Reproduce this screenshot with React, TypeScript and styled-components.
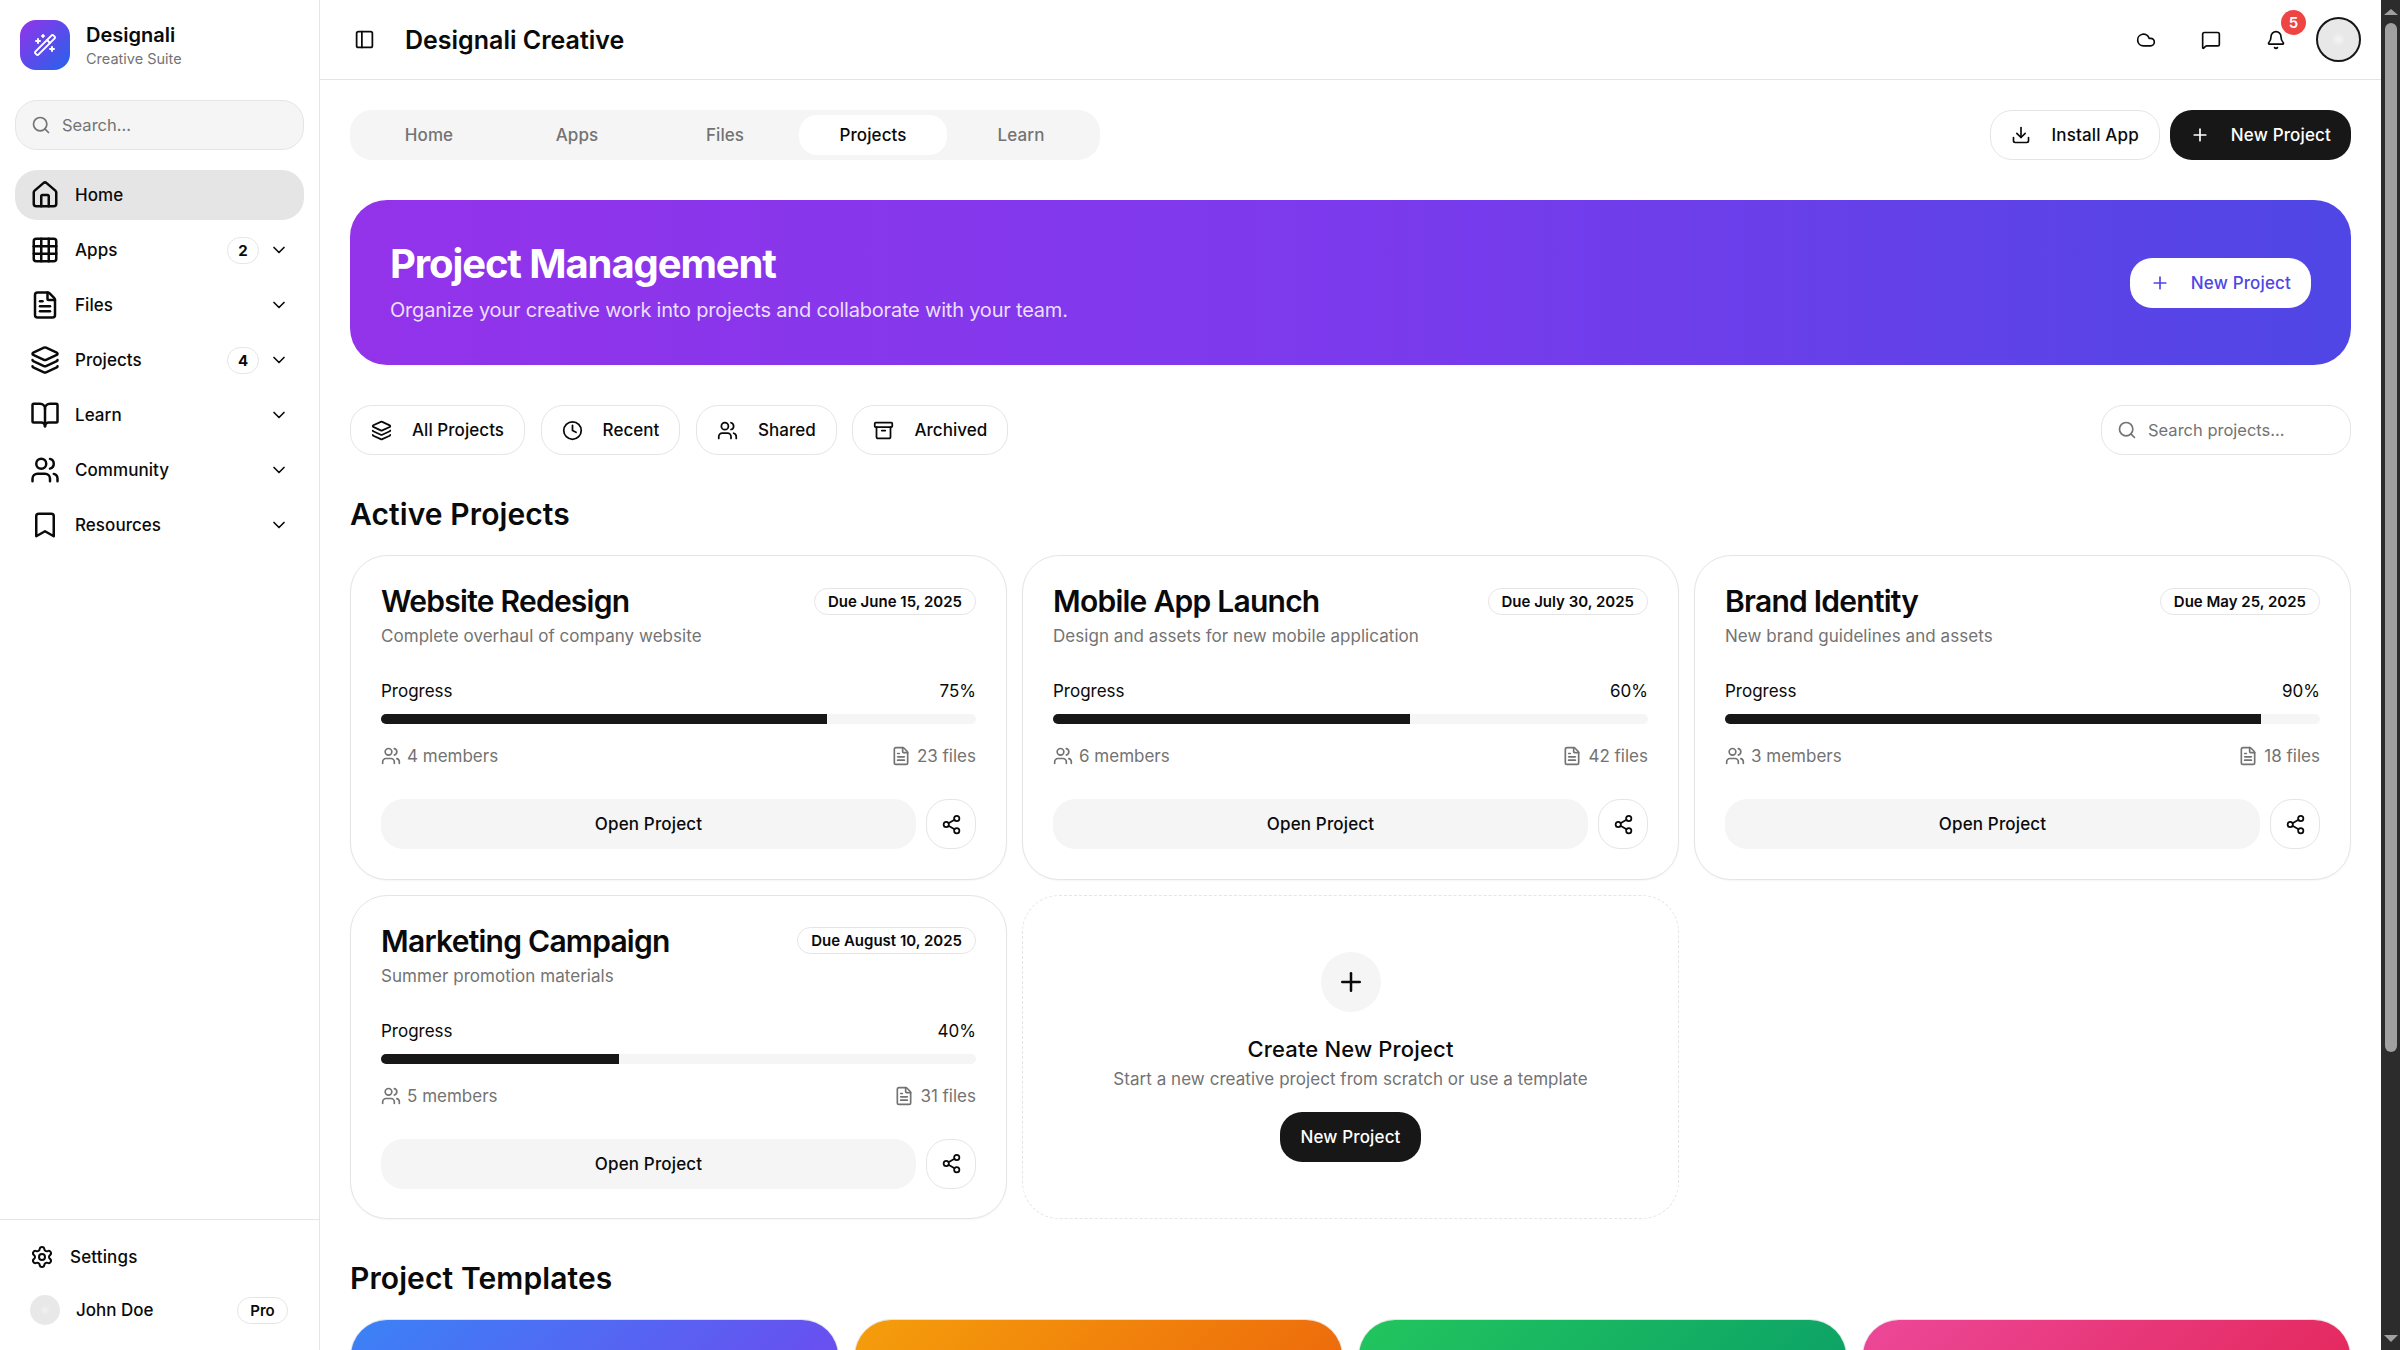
import React from "react";
import styled, { createGlobalStyle } from "styled-components";
import {
  Archive,
  Bell,
  BookOpen,
  Bookmark,
  ChevronDown,
  Clock,
  Cloud,
  Download,
  FileText,
  Grid3x3,
  House,
  Layers,
  MessageSquare,
  PanelLeft,
  Plus,
  Search,
  Settings,
  Share2,
  Users,
  WandSparkles,
} from "lucide-react";

const INK = "#0a0a0a";
const DARK = "#171717";
const MUTED = "#737373";
const LINE = "#e5e5e5";
const SOFT = "#f5f5f5";
const RAIL = "#2c2c2c";
const THUMB = "#a0a0a0";

const GlobalStyle = createGlobalStyle`
  html {
    background: #fff;
  }
  body {
    margin: 0;
    overflow: hidden;
    font-family: Inter, "Liberation Sans", sans-serif;
    color: ${INK};
  }
  * {
    box-sizing: border-box;
  }
`;

const Frame = styled.div`
  display: flex;
  height: 100vh;
`;

const Pane = styled.div`
  flex: 1;
  min-width: 0;
  overflow: hidden;
`;

const Rail = styled.div`
  flex: 0 0 19px;
  display: flex;
  flex-direction: column;
  align-items: center;
  background: ${RAIL};
`;

const ArrowUp = styled.span`
  margin-top: 9px;
  border-left: 7px solid transparent;
  border-right: 7px solid transparent;
  border-bottom: 6px solid ${THUMB};
`;

const ArrowDown = styled.span`
  margin-top: auto;
  margin-bottom: 8px;
  border-left: 7px solid transparent;
  border-right: 7px solid transparent;
  border-top: 7px solid ${THUMB};
`;

const Thumb = styled.span`
  margin-top: 8px;
  width: 12px;
  height: 1029px;
  border-radius: 6px;
  background: ${THUMB};
`;

const Shell = styled.div`
  display: flex;
  align-items: flex-start;
`;

const Sidebar = styled.aside`
  flex: 0 0 320px;
  height: 100vh;
  display: flex;
  flex-direction: column;
  border-right: 1px solid ${LINE};
  background: #fff;
`;

const Brand = styled.div`
  display: flex;
  align-items: center;
  gap: 16px;
  padding: 20px 20px 0;
`;

const BrandLogo = styled.div`
  width: 50px;
  height: 50px;
  border-radius: 16px;
  display: flex;
  align-items: center;
  justify-content: center;
  color: #fff;
  background: linear-gradient(135deg, #9333ea, #2563eb);
`;

const BrandName = styled.div`
  font-size: 20px;
  line-height: 28px;
  font-weight: 600;
`;

const BrandSub = styled.div`
  font-size: 14.5px;
  line-height: 20px;
  color: ${MUTED};
`;

const SideSearch = styled.div`
  margin: 30px 15px 20px;
  height: 50px;
  padding: 0 15px;
  display: flex;
  align-items: center;
  gap: 11px;
  background: ${SOFT};
  border: 1px solid ${LINE};
  border-radius: 22px;
  font-size: 16.5px;
  color: ${MUTED};
`;

const Nav = styled.nav`
  display: flex;
  flex-direction: column;
  gap: 5px;
  padding: 0 15px;
  flex: 1;
`;

const NavRow = styled.div<{ $active?: boolean }>`
  height: 50px;
  display: flex;
  align-items: center;
  padding: 0 15px;
  gap: 10px;
  border-radius: 22px;
  font-size: 17px;
  letter-spacing: 0.05px;
  font-weight: 500;
  background: ${({ $active }) => ($active ? LINE : "transparent")};
`;

const NavLabel = styled.span`
  flex: 1;
  margin-left: 5px;
`;

const Count = styled.span`
  width: 32px;
  height: 27px;
  display: flex;
  align-items: center;
  justify-content: center;
  border: 1px solid ${LINE};
  border-radius: 14px;
  font-size: 15px;
  font-weight: 700;
`;

const SideFooter = styled.div`
  border-top: 1px solid ${LINE};
  padding: 19px 30px 0;
  height: 131px;
  display: flex;
  flex-direction: column;
`;

const SettingsRow = styled.div`
  height: 36px;
  display: flex;
  align-items: center;
  gap: 16px;
  font-size: 17px;
  letter-spacing: 0.15px;
  font-weight: 500;
`;

const UserRow = styled.div`
  margin-top: 20px;
  height: 30px;
  display: flex;
  align-items: center;
  gap: 16px;
  font-size: 17px;
  font-weight: 500;
  padding-right: 1px;
`;

const UserDot = styled.span`
  width: 30px;
  height: 30px;
  border-radius: 50%;
  background: radial-gradient(circle, #f2f2f2 0, #e8e8e8 5px);
`;

const ProTag = styled.span`
  margin-left: auto;
  width: 51px;
  height: 27px;
  display: flex;
  align-items: center;
  justify-content: center;
  border: 1px solid ${LINE};
  border-radius: 14px;
  font-size: 15px;
  font-weight: 600;
`;

const Main = styled.div`
  flex: 1;
  min-width: 0;
`;

const Header = styled.header`
  height: 80px;
  display: flex;
  align-items: center;
  padding: 0 20px 0 34px;
  background: #fff;
  border-bottom: 1px solid ${LINE};
`;

const HeaderTitle = styled.h1`
  margin: 0 0 0 30px;
  font-size: 25px;
  font-weight: 600;
  flex: 1;
`;

const HeaderIcons = styled.div`
  display: flex;
  align-items: center;
  gap: 15px;
`;

const IconSlot = styled.div`
  position: relative;
  width: 50px;
  height: 50px;
  display: flex;
  align-items: center;
  justify-content: center;
`;

const Alert = styled.span`
  position: absolute;
  top: -5px;
  right: -5px;
  width: 25px;
  height: 25px;
  border-radius: 50%;
  display: flex;
  align-items: center;
  justify-content: center;
  background: #ef4444;
  color: #fff;
  font-size: 15px;
  font-weight: 600;
`;

const Avatar = styled.div`
  width: 45px;
  height: 45px;
  border-radius: 50%;
  background: radial-gradient(circle, #f5f5f5 0, #e8e8e8 7px);
  border: 2px solid ${DARK};
`;

const Content = styled.main`
  padding: 30px;
`;

const TopRow = styled.div`
  display: flex;
  justify-content: space-between;
`;

const Tabs = styled.div`
  width: 750px;
  height: 50px;
  padding: 5px;
  display: grid;
  grid-template-columns: repeat(5, 1fr);
  background: ${SOFT};
  border-radius: 22px;
`;

const Tab = styled.div<{ $active?: boolean }>`
  display: flex;
  align-items: center;
  justify-content: center;
  border-radius: 18px;
  font-size: 17px;
  letter-spacing: 0.1px;
  font-weight: 500;
  color: ${({ $active }) => ($active ? INK : MUTED)};
  background: ${({ $active }) => ($active ? "#fff" : "transparent")};
`;

const Actions = styled.div`
  display: flex;
  gap: 10px;
`;

const Button = styled.div<{ $variant?: "dark" | "line" | "white" }>`
  height: 50px;
  display: flex;
  align-items: center;
  gap: 21px;
  padding: 0 20px;
  border-radius: 22px;
  font-size: 17px;
  letter-spacing: 0.15px;
  font-weight: 500;
  white-space: nowrap;
  ${({ $variant }) =>
    $variant === "dark"
      ? `background: ${DARK}; color: #fff;`
      : $variant === "white"
        ? `background: #fff; color: #4f46e5;`
        : `background: #fff; border: 1px solid ${LINE};`}
`;

const Hero = styled.section`
  margin-top: 40px;
  height: 165px;
  padding: 0 40px;
  display: flex;
  align-items: center;
  justify-content: space-between;
  border-radius: 37px;
  color: #fff;
  background: linear-gradient(90deg, #9333ea, #7c3aed 50%, #4f46e5);
`;

const HeroTitle = styled.h2`
  margin: 0;
  font-size: 40px;
  line-height: 50px;
  font-weight: 700;
  letter-spacing: -1.1px;
`;

const HeroText = styled.p`
  margin: 6px 0 2px;
  font-size: 20px;
  line-height: 30px;
  letter-spacing: -0.2px;
  color: rgba(255, 255, 255, 0.85);
`;

const FilterRow = styled.div`
  margin-top: 40px;
  display: flex;
  align-items: center;
  gap: 15.5px;
`;

const Filter = styled(Button)`
  gap: 20px;
  letter-spacing: 0.05px;
`;

const ProjectSearch = styled.div`
  margin-left: auto;
  width: 250px;
  height: 50px;
  padding: 0 15px;
  display: flex;
  align-items: center;
  gap: 11px;
  border: 1px solid ${LINE};
  border-radius: 22px;
  font-size: 16.5px;
  color: ${MUTED};
`;

const SectionTitle = styled.h2<{ $top: number; $bottom: number }>`
  margin: ${({ $top }) => $top}px 0 ${({ $bottom }) => $bottom}px;
  font-size: 30px;
  line-height: 40px;
  font-weight: 600;
  letter-spacing: 0.1px;
`;

const CardGrid = styled.div`
  display: grid;
  grid-template-columns: repeat(3, 1fr);
  grid-auto-rows: 324.5px;
  gap: 15px;
`;

const Card = styled.article`
  padding: 20px 30px 0;
  border: 1px solid ${LINE};
  border-radius: 37px;
  background: #fff;
  box-shadow: 0 1px 2px rgba(0, 0, 0, 0.04);
`;

const CardHead = styled.div`
  display: flex;
  align-items: center;
  justify-content: space-between;
  height: 50px;
`;

const CardTitle = styled.h3`
  margin: 0;
  font-size: 30px;
  font-weight: 600;
  letter-spacing: -0.75px;
`;

const DueTag = styled.span`
  height: 27px;
  padding: 0 13px;
  display: flex;
  align-items: center;
  border: 1px solid ${LINE};
  border-radius: 14px;
  font-size: 15px;
  font-weight: 600;
`;

const CardSub = styled.p`
  margin: -2px 0 0;
  font-size: 17px;
  line-height: 24px;
  letter-spacing: 0.05px;
  color: ${MUTED};
`;

const ProgressHead = styled.div`
  margin-top: 31px;
  display: flex;
  justify-content: space-between;
  font-size: 17px;
  line-height: 24px;
`;

const Track = styled.div`
  margin-top: 11px;
  height: 10px;
  border-radius: 5px;
  background: ${SOFT};
  overflow: hidden;
`;

const Fill = styled.div`
  height: 100%;
  background: ${DARK};
`;

const Meta = styled.div`
  margin-top: 20px;
  height: 24px;
  display: flex;
  justify-content: space-between;
  font-size: 17px;
  color: ${MUTED};
`;

const MetaItem = styled.span`
  display: flex;
  align-items: center;
  gap: 6px;
`;

const CardActions = styled.div`
  margin-top: 31px;
  display: flex;
  gap: 10px;
`;

const OpenButton = styled.div`
  flex: 1;
  height: 50px;
  display: flex;
  align-items: center;
  justify-content: center;
  background: ${SOFT};
  border-radius: 22px;
  font-size: 17px;
  letter-spacing: 0.15px;
  font-weight: 500;
`;

const ShareButton = styled.div`
  width: 50px;
  height: 50px;
  display: flex;
  align-items: center;
  justify-content: center;
  border: 1px solid ${LINE};
  border-radius: 22px;
`;

const NewCard = styled.article`
  border: 1px dashed ${LINE};
  border-radius: 37px;
  display: flex;
  flex-direction: column;
  align-items: center;
  padding-top: 56px;
`;

const PlusCircle = styled.div`
  width: 60px;
  height: 60px;
  border-radius: 50%;
  background: ${SOFT};
  display: flex;
  align-items: center;
  justify-content: center;
`;

const NewTitle = styled.h3`
  margin: 21px 0 0;
  font-size: 22px;
  line-height: 32px;
  letter-spacing: 0.15px;
  font-weight: 500;
`;

const NewText = styled.p`
  margin: 2px 0 0;
  font-size: 17px;
  line-height: 24px;
  letter-spacing: 0.05px;
  color: ${MUTED};
`;

const NewButton = styled(Button)`
  margin-top: 21px;
`;

const TemplateGrid = styled.div`
  display: grid;
  grid-template-columns: repeat(4, 1fr);
  gap: 15px;
`;

const Template = styled.div<{ $from: string; $to: string }>`
  height: 366px;
  border: 1px solid ${LINE};
  border-radius: 37px;
  overflow: hidden;
  &::before {
    content: "";
    display: block;
    height: 240px;
    background: linear-gradient(135deg, ${({ $from }) => $from}, ${({ $to }) => $to});
  }
`;

const navItems = [
  { label: "Home", icon: House, active: true },
  { label: "Apps", icon: Grid3x3, count: 2, more: true },
  { label: "Files", icon: FileText, more: true },
  { label: "Projects", icon: Layers, count: 4, more: true },
  { label: "Learn", icon: BookOpen, more: true },
  { label: "Community", icon: Users, more: true },
  { label: "Resources", icon: Bookmark, more: true },
];

const tabs = ["Home", "Apps", "Files", "Projects", "Learn"];

const filters = [
  { label: "All Projects", icon: Layers },
  { label: "Recent", icon: Clock },
  { label: "Shared", icon: Users },
  { label: "Archived", icon: Archive },
];

const projects = [
  { title: "Website Redesign", due: "Due June 15, 2025", sub: "Complete overhaul of company website", progress: 75, members: 4, files: 23 },
  { title: "Mobile App Launch", due: "Due July 30, 2025", sub: "Design and assets for new mobile application", progress: 60, members: 6, files: 42 },
  { title: "Brand Identity", due: "Due May 25, 2025", sub: "New brand guidelines and assets", progress: 90, members: 3, files: 18 },
  { title: "Marketing Campaign", due: "Due August 10, 2025", sub: "Summer promotion materials", progress: 40, members: 5, files: 31 },
];

const templates = [
  { from: "#3b82f6", to: "#7c3aed" },
  { from: "#f59e0b", to: "#ea580c" },
  { from: "#22c55e", to: "#059669" },
  { from: "#ec4899", to: "#e11d48" },
];

export default function App() {
  return (
    <>
      <GlobalStyle />
      <Frame>
        <Pane>
          <Shell>
            <Sidebar>
              <Brand>
                <BrandLogo>
                  <WandSparkles size={24} />
                </BrandLogo>
                <div>
                  <BrandName>Designali</BrandName>
                  <BrandSub>Creative Suite</BrandSub>
                </div>
              </Brand>
              <SideSearch>
                <Search size={20} />
                Search...
              </SideSearch>
              <Nav>
                {navItems.map((item) => (
                  <NavRow key={item.label} $active={item.active}>
                    <item.icon size={30} />
                    <NavLabel>{item.label}</NavLabel>
                    {item.count && <Count>{item.count}</Count>}
                    {item.more && <ChevronDown size={20} />}
                  </NavRow>
                ))}
              </Nav>
              <SideFooter>
                <SettingsRow>
                  <Settings size={24} />
                  Settings
                </SettingsRow>
                <UserRow>
                  <UserDot />
                  John Doe
                  <ProTag>Pro</ProTag>
                </UserRow>
              </SideFooter>
            </Sidebar>
            <Main>
              <Header>
                <PanelLeft size={21} />
                <HeaderTitle>Designali Creative</HeaderTitle>
                <HeaderIcons>
                  <IconSlot>
                    <Cloud size={20} />
                  </IconSlot>
                  <IconSlot>
                    <MessageSquare size={20} />
                  </IconSlot>
                  <IconSlot>
                    <Bell size={20} />
                    <Alert>5</Alert>
                  </IconSlot>
                  <Avatar />
                </HeaderIcons>
              </Header>
              <Content>
                <TopRow>
                  <Tabs>
                    {tabs.map((tab) => (
                      <Tab key={tab} $active={tab === "Projects"}>
                        {tab}
                      </Tab>
                    ))}
                  </Tabs>
                  <Actions>
                    <Button $variant="line">
                      <Download size={20} />
                      Install App
                    </Button>
                    <Button $variant="dark">
                      <Plus size={20} />
                      New Project
                    </Button>
                  </Actions>
                </TopRow>
                <Hero>
                  <div>
                    <HeroTitle>Project Management</HeroTitle>
                    <HeroText>Organize your creative work into projects and collaborate with your team.</HeroText>
                  </div>
                  <Button $variant="white">
                    <Plus size={20} />
                    New Project
                  </Button>
                </Hero>
                <FilterRow>
                  {filters.map((filter) => (
                    <Filter key={filter.label} $variant="line">
                      <filter.icon size={21} />
                      {filter.label}
                    </Filter>
                  ))}
                  <ProjectSearch>
                    <Search size={20} />
                    Search projects...
                  </ProjectSearch>
                </FilterRow>
                <SectionTitle $top={39} $bottom={21}>Active Projects</SectionTitle>
                <CardGrid>
                  {projects.map((project) => (
                    <Card key={project.title}>
                      <CardHead>
                        <CardTitle>{project.title}</CardTitle>
                        <DueTag>{project.due}</DueTag>
                      </CardHead>
                      <CardSub>{project.sub}</CardSub>
                      <ProgressHead>
                        <span>Progress</span>
                        <span>{project.progress}%</span>
                      </ProgressHead>
                      <Track>
                        <Fill style={{ width: `${project.progress}%` }} />
                      </Track>
                      <Meta>
                        <MetaItem>
                          <Users size={20} />
                          {project.members} members
                        </MetaItem>
                        <MetaItem>
                          <FileText size={20} />
                          {project.files} files
                        </MetaItem>
                      </Meta>
                      <CardActions>
                        <OpenButton>Open Project</OpenButton>
                        <ShareButton>
                          <Share2 size={21} />
                        </ShareButton>
                      </CardActions>
                    </Card>
                  ))}
                  <NewCard>
                    <PlusCircle>
                      <Plus size={30} />
                    </PlusCircle>
                    <NewTitle>Create New Project</NewTitle>
                    <NewText>Start a new creative project from scratch or use a template</NewText>
                    <NewButton $variant="dark">New Project</NewButton>
                  </NewCard>
                </CardGrid>
                <SectionTitle $top={39} $bottom={21}>Project Templates</SectionTitle>
                <TemplateGrid>
                  {templates.map((template) => (
                    <Template key={template.from} $from={template.from} $to={template.to} />
                  ))}
                </TemplateGrid>
              </Content>
            </Main>
          </Shell>
        </Pane>
        <Rail>
          <ArrowUp />
          <Thumb />
          <ArrowDown />
        </Rail>
      </Frame>
    </>
  );
}
